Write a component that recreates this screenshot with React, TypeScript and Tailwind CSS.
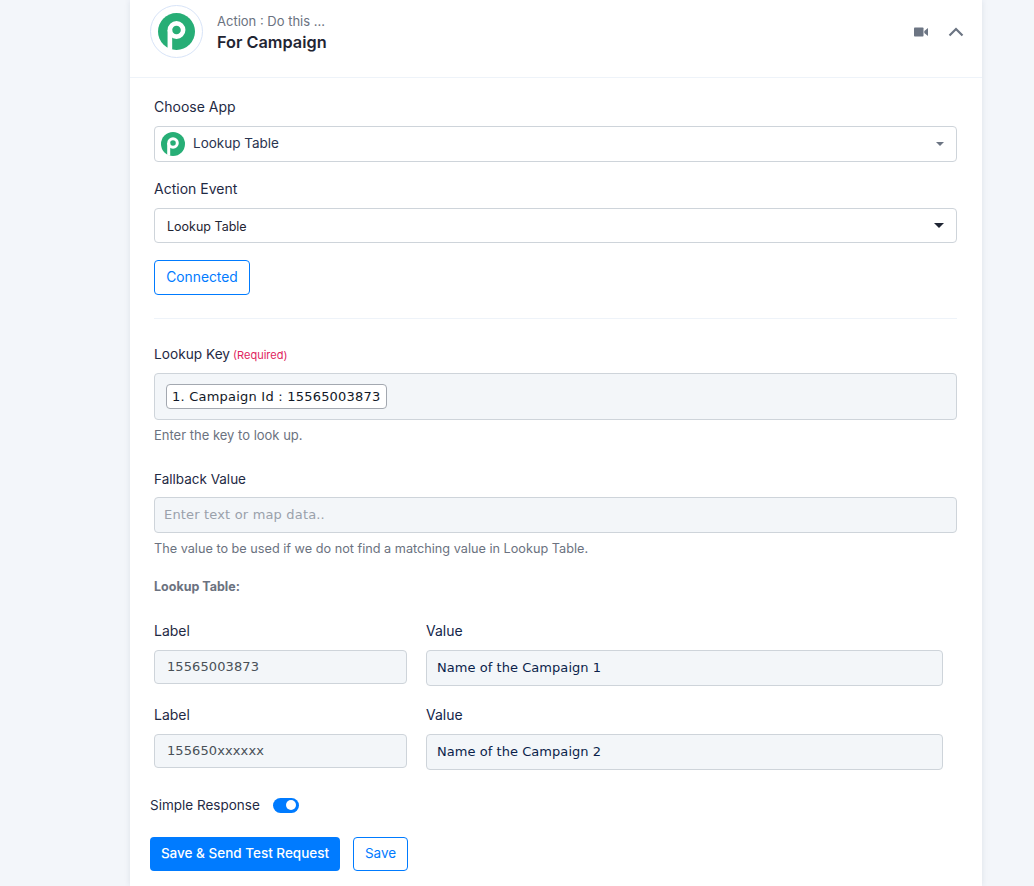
import React from "react";

const inter = "font-['Inter','Liberation_Sans',sans-serif]";
const dejavu = "font-['DejaVu_Sans','Liberation_Sans',sans-serif]";

function PLogo({ size }: { size: number }) {
  return (
    <svg width={size} height={size} viewBox="0 0 36 36" aria-hidden="true">
      <circle cx="18" cy="18" r="18" fill="#27ae76" />
      <circle cx="18" cy="16.5" r="6.45" fill="none" stroke="#fff" strokeWidth="4.5" />
      <path d="M11.55 16.5V35.6" fill="none" stroke="#fff" strokeWidth="4.5" />
    </svg>
  );
}

function Row({ label, a, b }: { label: string; a: string; b: string }) {
  return (
    <div className="flex items-start">
      <div className="w-[253px] shrink-0">
        <div className="h-[19px] text-[14px] leading-[17px] text-[#1f2a44]">{label}</div>
        <div className={`mt-[9px] flex h-[34px] items-center rounded-[4px] border border-[#ced4da] bg-[#f3f6f9] pl-[12px] text-[13px] tracking-[0.1px] text-[#495057] ${dejavu}`}>
          {a}
        </div>
      </div>
      <div className="ml-[19px] w-[517px] shrink-0">
        <div className="h-[19px] text-[14px] leading-[17px] text-[#12264a]">Value</div>
        <div className={`mt-[9px] flex h-[36px] items-center rounded-[4px] border border-[#ced4da] bg-[#f3f6f9] pl-[10px] text-[13px] tracking-[0.05px] text-[#0b1f4b] ${dejavu}`}>
          {b}
        </div>
      </div>
    </div>
  );
}

export default function App() {
  return (
    <div className={`flex h-[886px] justify-start overflow-hidden bg-[#f3f6fa] pl-[130px] ${inter}`}>
      <div className="h-[886px] w-[852px] bg-white shadow-[0_0_6px_rgba(30,50,90,0.10)]">
        <header className="flex h-[78px] items-start border-b border-[#eef3f9] pl-[20px] pr-[18px] pt-[5px]">
          <div className="flex h-[53px] w-[53px] items-center justify-center rounded-full border border-[#d8e4f8] bg-white">
            <PLogo size={37} />
          </div>
          <div className="ml-[14px] mt-[7px]">
            <div className="text-[13px] leading-[18px] text-[#6b7280]">Action : Do this ...</div>
            <div className="mt-[1px] text-[16.3px] font-semibold leading-[22px] text-[#1f2533]">For Campaign</div>
          </div>
          <div className="ml-auto mt-[22px] flex items-center gap-[18px]">
            <svg width="14" height="10" viewBox="0 0 14 10" aria-hidden="true">
              <rect x="0" y="0.5" width="9.5" height="9" rx="0.8" fill="#6c7583" />
              <path d="M10.3 4 14 1v8l-3.7-3z" fill="#6c7583" />
            </svg>
            <svg width="16" height="10" viewBox="0 0 16 10" aria-hidden="true" className="ml-[2px]">
              <path d="M1.5 8.5 8 2l6.5 6.5" fill="none" stroke="#6c7583" strokeWidth="2.2" />
            </svg>
          </div>
        </header>

        <div className="pl-[24px] pr-[25px]">
          <div className="mt-[19px] h-[19px] text-[14px] leading-[19px] text-[#1f2a44]">Choose App</div>
          <div className="mt-[10px] flex h-[36px] items-center rounded-[4px] border border-[#ced4da] bg-white pb-[1px] pl-[6px] pr-[12px]">
            <PLogo size={24} />
            <span className="ml-[8px] text-[13.5px] text-[#2a3550]">Lookup Table</span>
            <span className="ml-auto h-0 w-0 border-x-[4px] border-t-[4px] border-x-transparent border-t-[#6c7583]" />
          </div>

          <div className="mt-[17px] h-[19px] text-[14px] leading-[19px] text-[#1f2a44]">Action Event</div>
          <div className="mt-[10px] flex h-[35px] items-center rounded-[4px] border border-[#ced4da] bg-white pl-[12px] pr-[12px]">
            <span className="translate-y-[2px] text-[12.5px] text-[#1f2533]">Lookup Table</span>
            <span className="ml-auto h-0 w-0 border-x-[5px] border-t-[5px] border-x-transparent border-t-[#1f2533]" />
          </div>

          <button className="mt-[17px] flex h-[35px] w-[96px] items-center justify-center rounded-[4px] border border-[#007bff] bg-white pb-[1px] text-[13.8px] text-[#007bff]">
            Connected
          </button>

          <div className="mt-[23px] border-t border-[#eef3f9]" />

          <div className="mt-[26px] flex h-[19px] items-baseline text-[13.7px] leading-[19px] text-[#1f2a44]">
            Lookup Key<span className="ml-[3px] text-[11px] text-[#e0245e]">(Required)</span>
          </div>
          <div className="mt-[9px] flex h-[47px] items-center rounded-[4px] border border-[#ced4da] bg-[#f3f6f9] pl-[11px]">
            <span className={`flex h-[25px] items-center rounded-[4px] border border-[#a3a8b0] bg-white px-[5px] text-[13px] tracking-[0.22px] text-[#111827] ${dejavu}`}>
              1. Campaign Id : 15565003873
            </span>
          </div>
          <div className="mt-[7px] text-[13px] leading-[17px] text-[#6b7280]">Enter the key to look up.</div>

          <div className="mt-[26px] h-[19px] text-[13.5px] leading-[19px] text-[#1f2a44]">Fallback Value</div>
          <div className={`mt-[8px] flex h-[36px] items-center rounded-[4px] border border-[#ced4da] bg-[#f3f6f9] pl-[9px] text-[13px] tracking-[0.17px] text-[#9aa1ab] ${dejavu}`}>
            Enter text or map data..
          </div>
          <div className="mt-[7px] text-[12.7px] leading-[17px] text-[#6b7280]">
            The value to be used if we do not find a matching value in Lookup Table.
          </div>

          <div className="mt-[21px] text-[12.5px] font-bold leading-[17px] text-[#6b7280]">Lookup Table:</div>

          <div className="mt-[27px]">
            <Row label="Label" a="15565003873" b="Name of the Campaign 1" />
          </div>
          <div className="mt-[20px]">
            <Row label="Label" a="155650xxxxxx" b="Name of the Campaign 2" />
          </div>
        </div>

        <div className="pl-[20px]">
          <div className="mt-[27px] flex h-[16px] items-center">
            <span className="text-[13.5px] text-[#1f2a44]">Simple Response</span>
            <span className="ml-[13px] flex h-[15px] w-[26px] items-center justify-end rounded-full bg-[#007bff] pr-[3px]">
              <span className="h-[10px] w-[10px] rounded-full bg-white" />
            </span>
          </div>
          <div className="mt-[24px] flex items-center gap-[13px]">
            <button className="flex h-[34px] w-[190px] items-center justify-center rounded-[4px] bg-[#007bff] pb-[2px] text-[13.5px] font-medium text-white">
              Save &amp; Send Test Request
            </button>
            <button className="flex h-[34px] w-[55px] items-center justify-center rounded-[4px] border border-[#007bff] bg-white pb-[2px] text-[13.5px] text-[#007bff]">
              Save
            </button>
          </div>
        </div>
      </div>
    </div>
  );
}
